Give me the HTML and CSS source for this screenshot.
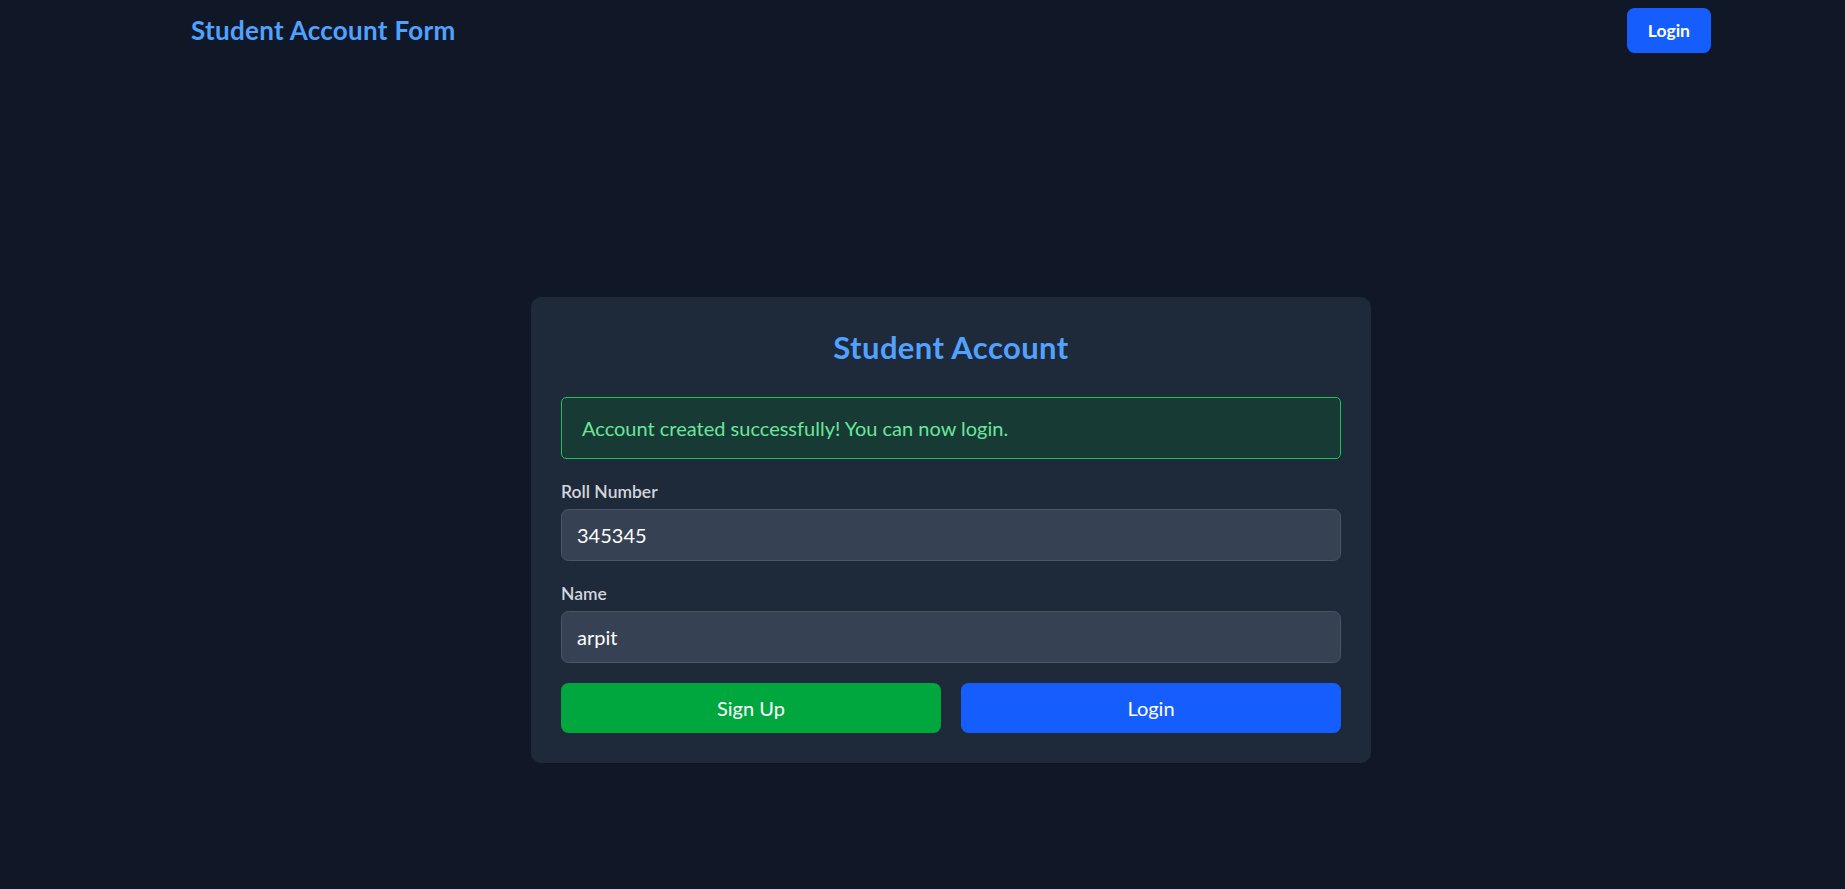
FILE: index.html
```html
<!DOCTYPE html>
<html lang="en">
<head>
<meta charset="utf-8">
<title>Student Account Form</title>
<link rel="stylesheet" href="styles.css">
</head>
<body>
<div class="page">
  <header class="topbar">
    <div class="topbar-inner">
      <h1 class="brand">Student Account Form</h1>
      <button class="nav-login" type="button">Login</button>
    </div>
  </header>
  <main class="main">
    <section class="card">
      <h2 class="card-title">Student Account</h2>
      <div class="alert">Account created successfully! You can now login.</div>
      <div class="field">
        <label class="label" for="roll">Roll Number</label>
        <input class="input" id="roll" type="text" value="345345">
      </div>
      <div class="field">
        <label class="label" for="name">Name</label>
        <input class="input" id="name" type="text" value="arpit">
      </div>
      <div class="actions">
        <button class="btn btn-green" type="button">Sign Up</button>
        <button class="btn btn-blue" type="button">Login</button>
      </div>
    </section>
  </main>
</div>
</body>
</html>
```

FILE: styles.css
```css
* { box-sizing: border-box; }
html, body { margin: 0; padding: 0; }
body {
  background: #101828;
  font-family: Lato, "Noto Sans", "Liberation Sans", sans-serif;
  color: #ffffff;
  min-height: 889px;
  overflow: hidden;
}
.page {
  padding-left: 57px;
}
.topbar {
  padding: 8px 0;
}
.topbar-inner {
  max-width: 1600px;
  margin: 0 auto;
  padding: 0 40px;
  display: flex;
  align-items: center;
  justify-content: space-between;
}
.brand {
  margin: 0;
  font-size: 26px;
  line-height: 35px;
  letter-spacing: 0.3px;
  font-weight: 700;
  color: #51a2ff;
}
.nav-login {
  height: 45px;
  padding: 0 21px;
  border: none;
  border-radius: 7.5px;
  background: #155dfc;
  color: #ffffff;
  font-family: inherit;
  font-size: 17.5px;
  font-weight: 700;
  line-height: 25px;
}
.main {
  padding-top: 236px;
  display: flex;
  justify-content: center;
}
.card {
  width: 840px;
  background: #1e2939;
  border-radius: 10px;
  padding: 30px;
}
.card-title {
  margin: 0 0 30px;
  text-align: center;
  font-size: 31px;
  line-height: 40px;
  letter-spacing: 0.4px;
  font-weight: 700;
  color: #51a2ff;
}
.alert {
  margin-bottom: 20px;
  padding: 15px 20px;
  border: 1px solid #1fbf5a;
  border-radius: 5px;
  background: #183a34;
  color: #6ae69c;
  font-size: 20px;
  line-height: 30px;
}
.field {
  margin-bottom: 20px;
}
.label {
  display: block;
  margin-bottom: 5px;
  font-size: 17.5px;
  line-height: 25px;
  font-weight: 600;
  color: #d1d5dc;
}
.input {
  display: block;
  width: 100%;
  height: 52px;
  padding: 0 15px;
  background: #364153;
  border: 1px solid #4a5565;
  border-radius: 7.5px;
  color: #ffffff;
  font-family: inherit;
  font-size: 20px;
  line-height: 30px;
  outline: none;
}
.actions {
  display: grid;
  grid-template-columns: 1fr 1fr;
  gap: 20px;
}
.btn {
  height: 50px;
  border: none;
  border-radius: 7.5px;
  color: #ffffff;
  font-family: inherit;
  font-size: 20px;
  line-height: 30px;
}
.btn-green { background: #00a63e; }
.btn-blue { background: #155dfc; }
```
